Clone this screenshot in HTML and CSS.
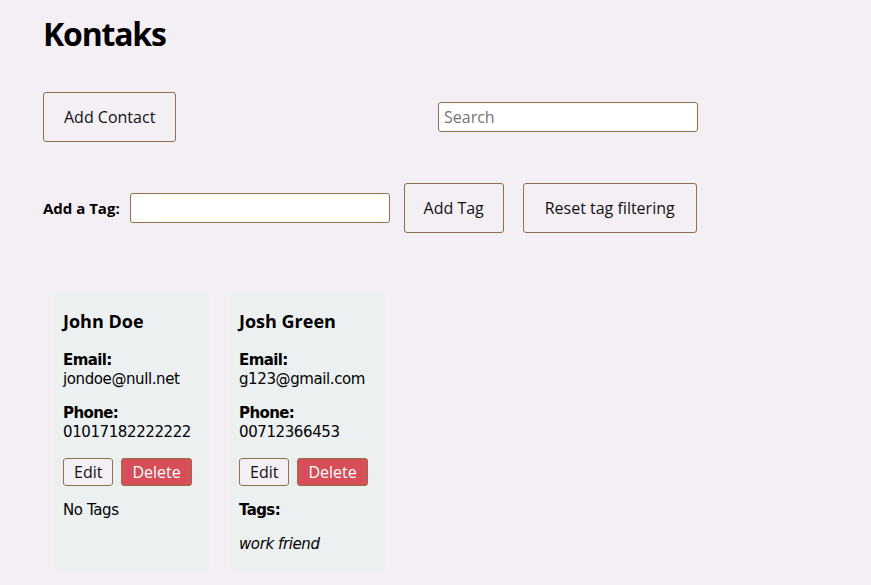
FILE: index.html
```html
<!DOCTYPE html>
<html>
<head>
<meta charset="utf-8">
<link rel="stylesheet" href="styles.css">
</head>
<body>
<div class="app">
  <h1 class="title">Kontaks</h1>
  <div class="top-row">
    <button class="btn btn-lg">Add Contact</button>
    <input class="search" type="text" placeholder="Search">
  </div>
  <div class="tag-row">
    <label class="tag-label">Add a Tag:</label>
    <input class="tag-input" type="text">
    <button class="btn btn-lg btn-addtag">Add Tag</button>
    <button class="btn btn-lg btn-reset">Reset tag filtering</button>
  </div>
  <div class="cards">
    <div class="card">
      <h3 class="name">John Doe</h3>
      <p class="field"><b>Email:</b><br>jondoe@null.net</p>
      <p class="field"><b>Phone:</b><br>01017182222222</p>
      <div class="actions">
        <button class="btn btn-sm">Edit</button>
        <button class="btn btn-sm btn-danger">Delete</button>
      </div>
      <p class="field">No Tags</p>
    </div>
    <div class="card">
      <h3 class="name">Josh Green</h3>
      <p class="field"><b>Email:</b><br>g123@gmail.com</p>
      <p class="field"><b>Phone:</b><br>00712366453</p>
      <div class="actions">
        <button class="btn btn-sm">Edit</button>
        <button class="btn btn-sm btn-danger">Delete</button>
      </div>
      <p class="field"><b>Tags:</b></p>
      <p class="field tag"><i>work friend</i></p>
    </div>
  </div>
</div>
</body>
</html>
```

FILE: styles.css
```css
html, body {
  margin: 0;
  padding: 0;
  background: #f4eff5;
}
body {
  font-family: "Open Sans", "Noto Sans", sans-serif;
  color: #000;
  font-size: 16px;
}
.app {
  width: 655px;
  padding: 0 0 0 43px;
}
.title {
  font-size: 32px;
  font-weight: 700;
  line-height: 37px;
  margin: 15px 0 0 0;
  letter-spacing: -1.2px;
}
.top-row {
  display: flex;
  justify-content: space-between;
  align-items: center;
  margin-top: 40px;
}
.btn {
  font-family: inherit;
  font-size: 16px;
  color: #111;
  background: #f4eff5;
  border: 1px solid #8e7049;
  border-radius: 3px;
  cursor: pointer;
  padding: 0;
  white-space: nowrap;
}
.btn-lg {
  height: 50px;
  padding: 0 20px;
}
.search {
  width: 260px;
  height: 30px;
  box-sizing: border-box;
  border: 1px solid #8e7049;
  border-radius: 3px;
  background: #fff;
  font-family: inherit;
  font-size: 16px;
  padding: 0 5px;
}
.search::placeholder {
  color: #757575;
}
.tag-row {
  display: flex;
  align-items: center;
  margin-top: 41px;
}
.tag-label {
  font-weight: 700;
  font-size: 15px;
}
.tag-input {
  width: 260px;
  height: 30px;
  box-sizing: border-box;
  border: 1px solid #8e7049;
  border-radius: 3px;
  background: #fff;
  margin-left: 10px;
}
.btn-addtag {
  margin-left: 14px;
  width: 100px;
  padding: 0;
}
.btn-reset {
  margin-left: 19px;
  width: 174px;
  padding: 0;
}
.cards {
  display: flex;
  gap: 20px;
  margin: 60px 0 0 10px;
}
.card {
  background: #ecf0f1;
  width: 156px;
  box-sizing: border-box;
  padding: 1px 10px 18px 10px;
}
.name {
  font-size: 18px;
  font-weight: 700;
  line-height: 21px;
  margin: 17px 0 19px 0;
}
.field {
  font-family: "DejaVu Sans", sans-serif;
  margin: 0 0 15px 0;
  line-height: 19px;
  font-size: 15px;
  letter-spacing: -0.4px;
}
.field b {
  letter-spacing: -0.6px;
}
.field.tag {
  margin-bottom: 0;
}
.actions {
  display: flex;
  gap: 8px;
  margin: 16px 0 15px 0;
}
.btn-sm {
  height: 28px;
  font-size: 16px;
  padding: 0 10px;
}
.btn-danger {
  background: #d64e57;
  color: #fff;
}
```
